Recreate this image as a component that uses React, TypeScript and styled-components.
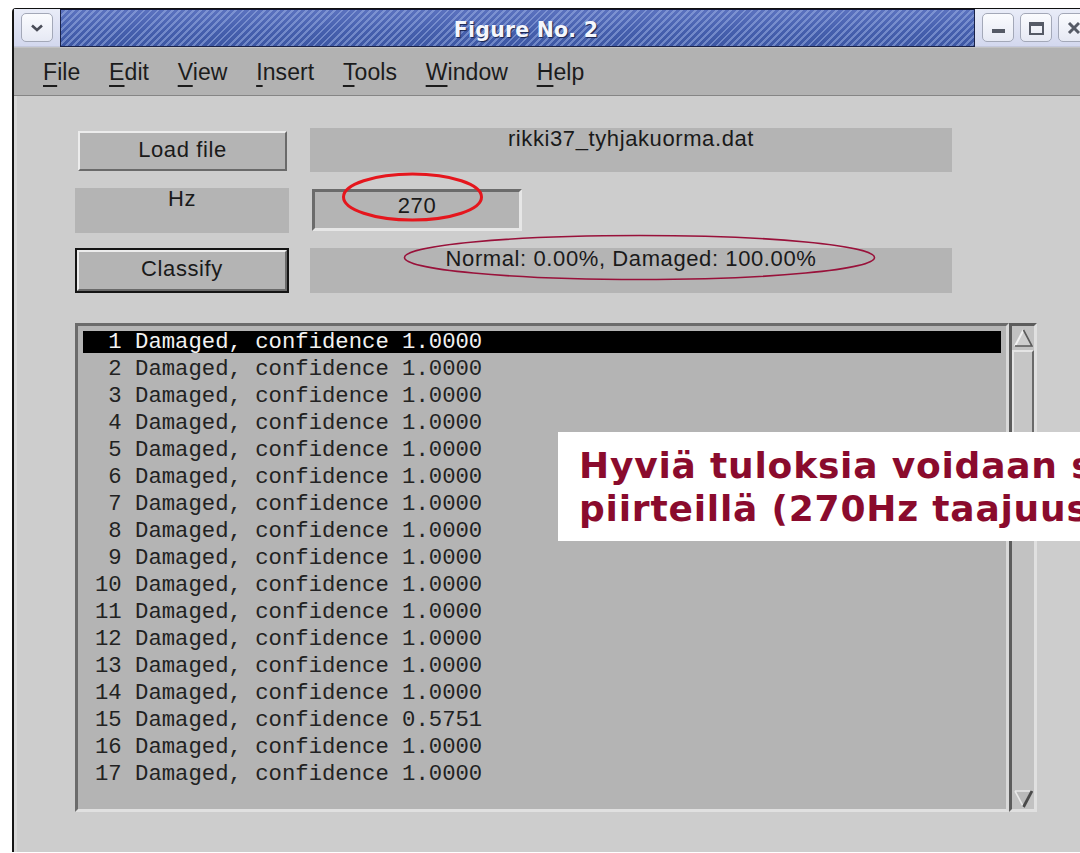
import React from "react";
import styled, { createGlobalStyle } from "styled-components";

const GlobalStyle = createGlobalStyle`
  html, body {
    margin: 0;
    padding: 0;
    background: #ffffff;
    overflow: hidden;
  }
  #root {
    width: 1080px;
    height: 853px;
  }
`;

const Page = styled.div`
  position: relative;
  width: 1080px;
  height: 853px;
  overflow: hidden;
  padding: 8px 0 0 12px;
  box-sizing: border-box;
  background: #ffffff;
`;

const Window = styled.div`
  width: 1100px;
  height: 844px;
  box-sizing: border-box;
  border-top: 1px solid #111;
  border-left: 2px solid #151515;
  border-top-left-radius: 4px;
  background: #cdcdcd;
  display: flex;
  flex-direction: column;
  box-shadow: inset 3px 0 0 #d8d8d8;
`;

/* ---------- title bar ---------- */

const TitleBar = styled.div`
  display: flex;
  height: 38px;
  flex: none;
`;

const Cap = styled.div<{ $grow?: boolean }>`
  flex: ${(p) => (p.$grow ? "1" : "none")};
  width: ${(p) => (p.$grow ? "auto" : "46px")};
  display: flex;
  align-items: center;
  gap: 6px;
  padding-left: 7px;
  box-sizing: border-box;
  background: linear-gradient(#e9ecf8, #d3d8ee);
  border-bottom: 1px solid #c4c8dc;
`;

const FrameButton = styled.div`
  width: 32px;
  height: 29px;
  flex: none;
  box-sizing: border-box;
  border: 1px solid #a3a8b8;
  border-radius: 5px;
  background: linear-gradient(#fafbfe, #e6e9f4);
  display: flex;
  align-items: center;
  justify-content: center;
`;

const Hatch = styled.div`
  width: 915px;
  flex: none;
  box-sizing: border-box;
  border: 1px solid #1a2248;
  border-top-color: #101530;
  background:
    repeating-linear-gradient(
      135deg,
      rgba(255, 255, 255, 0) 0px,
      rgba(255, 255, 255, 0) 3px,
      rgba(160, 180, 230, 0.5) 3px,
      rgba(160, 180, 230, 0.5) 5px
    ),
    linear-gradient(#5b72bf, #4660ae 55%, #3d57a3);
  display: flex;
  align-items: center;
  justify-content: center;
  padding: 4px 0 0 17px;
`;

const TitleText = styled.span`
  font-family: "DejaVu Sans", "Verdana", sans-serif;
  font-weight: bold;
  font-size: 20.5px;
  color: #f4f6fc;
  text-shadow: 1px 1px 1px #18224c;
  letter-spacing: 0.2px;
`;

/* ---------- menu bar ---------- */

const MenuBar = styled.div`
  height: 49px;
  flex: none;
  box-sizing: border-box;
  background: #b2b2b2;
  border-top: 1px solid #c2c2c2;
  border-bottom: 1px solid #858585;
  display: flex;
  align-items: center;
  padding: 2px 0 0 15px;
`;

const MenuItem = styled.span`
  font-family: "Liberation Sans", Arial, sans-serif;
  font-size: 23px;
  color: #1c1c1c;
  padding: 0 14.3px;
  letter-spacing: 0.1px;

  &:first-child {
    padding-left: 14px;
  }

  u {
    text-decoration-thickness: 2px;
    text-underline-offset: 5px;
  }
`;

/* ---------- figure body ---------- */

const Content = styled.div`
  flex: 1;
  padding: 32px 0 0 61px;
  display: flex;
  flex-direction: column;
`;

const ControlGrid = styled.div`
  display: grid;
  grid-template-columns: 214px 642px;
  grid-auto-rows: 45px;
  column-gap: 21px;
  row-gap: 15px;
`;

const uiText = `
  font-family: "Liberation Sans", Arial, sans-serif;
  font-size: 22px;
  letter-spacing: 0.6px;
  color: #1a1a1a;
`;

const PushButton = styled.div<{ $default?: boolean }>`
  ${uiText}
  box-sizing: border-box;
  background: #b4b4b4;
  display: flex;
  align-items: center;
  justify-content: center;
  padding-bottom: ${(p) => (p.$default ? "3px" : "2px")};
  margin: ${(p) => (p.$default ? "2px" : "3px 2px 2px 3px")};
  border: 2px solid;
  border-color: #ececec #6a6a6a #6a6a6a #ececec;
  box-shadow: ${(p) => (p.$default ? "0 0 0 2px #141414" : "none")};
`;

const Label = styled.div<{ $trim?: boolean }>`
  ${uiText}
  box-sizing: border-box;
  background: #b4b4b4;
  text-align: center;
  line-height: 22px;
  padding-top: 0;
  margin-bottom: ${(p) => (p.$trim ? "1px" : "0")};
`;

const EditField = styled.div`
  ${uiText}
  box-sizing: border-box;
  width: 210px;
  margin: 1px 0 2px 2px;
  background: #b4b4b4;
  border: 3px solid;
  border-color: #6b6b6b #e6e6e6 #e6e6e6 #6b6b6b;
  text-align: center;
  line-height: 22px;
  padding-top: 3px;
`;

const ListFrame = styled.div`
  margin-top: 30px;
  width: 962px;
  height: 489px;
  display: flex;
`;

const ListBox = styled.div`
  width: 934px;
  flex: none;
  box-sizing: border-box;
  background: #b4b4b4;
  border: 3px solid;
  border-color: #6b6b6b #d9d9d9 #e0e0e0 #6b6b6b;
  padding: 5px;
  display: flex;
  flex-direction: column;
  gap: 5px;
`;

const Row = styled.div<{ $selected?: boolean }>`
  height: 22px;
  line-height: 22px;
  padding-left: 12px;
  white-space: pre;
  font-family: "Liberation Mono", "Courier New", monospace;
  font-size: 22.25px;
  color: ${(p) => (p.$selected ? "#f2f2f2" : "#222222")};
  background: ${(p) => (p.$selected ? "#000000" : "transparent")};
`;

const Trough = styled.div`
  flex: 1;
  box-sizing: border-box;
  background: #c2c2c2;
  border: 3px solid;
  border-color: #5c5c5c #e0e0e0 #e0e0e0 #5c5c5c;
  display: flex;
  flex-direction: column;
  align-items: center;
  padding: 3px 0 1px;
`;

const Thumb = styled.div`
  width: 100%;
  height: 148px;
  margin-top: 3px;
  box-sizing: border-box;
  background: #c6c6c6;
  border: 2px solid;
  border-color: #e4e4e4 #6a6a6a #6a6a6a #e4e4e4;
`;

const Spacer = styled.div`
  flex: 1;
`;

/* ---------- overlays ---------- */

const Marks = styled.svg`
  position: absolute;
  left: 0;
  top: 0;
  pointer-events: none;
`;

const Callout = styled.div`
  position: absolute;
  left: 558px;
  top: 432px;
  width: 640px;
  box-sizing: border-box;
  background: #ffffff;
  padding: 12px 0 11px 21px;
  font-family: "DejaVu Sans", Verdana, sans-serif;
  font-weight: bold;
  font-size: 36px;
  line-height: 43px;
  color: #8a0b2d;
  white-space: nowrap;
  letter-spacing: 0.8px;
`;

const menus = ["File", "Edit", "View", "Insert", "Tools", "Window", "Help"];

const confidences = [
  "1.0000", "1.0000", "1.0000", "1.0000", "1.0000", "1.0000", "1.0000",
  "1.0000", "1.0000", "1.0000", "1.0000", "1.0000", "1.0000", "1.0000",
  "0.5751", "1.0000", "1.0000",
];

const Chevron = () => (
  <svg width="14" height="10" viewBox="0 0 14 10">
    <path d="M2 2.5 L7 7 L12 2.5" fill="none" stroke="#4a4d58" strokeWidth="2.6" />
  </svg>
);

const MinIcon = () => (
  <svg width="16" height="16" viewBox="0 0 16 16">
    <rect x="2" y="9" width="13" height="4" fill="#555a66" />
  </svg>
);

const MaxIcon = () => (
  <svg width="16" height="16" viewBox="0 0 16 16">
    <rect x="2" y="3" width="13" height="11" fill="none" stroke="#555a66" strokeWidth="2" />
    <rect x="2" y="3" width="13" height="3" fill="#555a66" />
  </svg>
);

const CloseIcon = () => (
  <svg width="16" height="16" viewBox="0 0 16 16">
    <path d="M3 3 L13 13 M13 3 L3 13" stroke="#555a66" strokeWidth="3" />
  </svg>
);

const UpArrow = () => (
  <svg width="19" height="18" viewBox="0 0 19 18">
    <polygon points="9.5,1 18,17 1,17" fill="#cdcdcd" />
    <path d="M1 17 L9.5 1" stroke="#f0f0f0" strokeWidth="2" />
    <path d="M9.5 1 L18 17 L1 17" fill="none" stroke="#5a5a5a" strokeWidth="1.6" />
  </svg>
);

const DownArrow = () => (
  <svg width="19" height="18" viewBox="0 0 19 18">
    <polygon points="1,1 18,1 9.5,17" fill="#b9b9b9" />
    <path d="M1 1 L18 1 M1 1 L9.5 17" fill="none" stroke="#e8e8e8" strokeWidth="1.6" />
    <path d="M18 1 L9.5 17" stroke="#4a4a4a" strokeWidth="2.8" />
  </svg>
);

export default function App() {
  return (
    <>
      <GlobalStyle />
      <Page>
        <Window>
          <TitleBar>
            <Cap>
              <FrameButton>
                <Chevron />
              </FrameButton>
            </Cap>
            <Hatch>
              <TitleText>Figure No. 2</TitleText>
            </Hatch>
            <Cap $grow>
              <FrameButton>
                <MinIcon />
              </FrameButton>
              <FrameButton>
                <MaxIcon />
              </FrameButton>
              <FrameButton>
                <CloseIcon />
              </FrameButton>
            </Cap>
          </TitleBar>

          <MenuBar>
            {menus.map((m) => (
              <MenuItem key={m}>
                <u>{m[0]}</u>
                {m.slice(1)}
              </MenuItem>
            ))}
          </MenuBar>

          <Content>
            <ControlGrid>
              <PushButton>Load file</PushButton>
              <Label $trim>rikki37_tyhjakuorma.dat</Label>
              <Label>Hz</Label>
              <EditField>270</EditField>
              <PushButton $default>Classify</PushButton>
              <Label>Normal: 0.00%, Damaged: 100.00%</Label>
            </ControlGrid>

            <ListFrame>
              <ListBox>
                {confidences.map((c, i) => (
                  <Row key={i} $selected={i === 0}>
                    {`${String(i + 1).padStart(2, " ")} Damaged, confidence ${c}`}
                  </Row>
                ))}
              </ListBox>
              <Trough>
                <UpArrow />
                <Thumb />
                <Spacer />
                <DownArrow />
              </Trough>
            </ListFrame>
          </Content>
        </Window>

        <Marks width="1080" height="853" viewBox="0 0 1080 853">
          <ellipse cx="412.5" cy="197" rx="69" ry="23" fill="none" stroke="#e5161d" strokeWidth="3" />
          <ellipse cx="639.5" cy="257.5" rx="235" ry="22" fill="none" stroke="#99113a" strokeWidth="1.6" />
        </Marks>

        <Callout>
          Hyviä tuloksia voidaan saada jo yksittäisillä
          <br />
          piirteillä (270Hz taajuuskomponentti)
        </Callout>
      </Page>
    </>
  );
}
